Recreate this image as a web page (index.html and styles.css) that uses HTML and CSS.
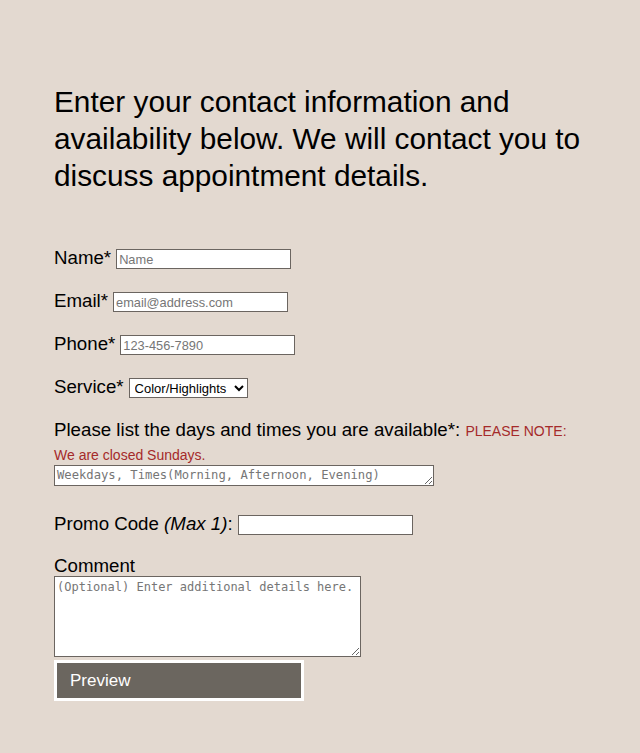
FILE: index.html
```html
<!DOCTYPE html>
<html lang="en">
<head>
<meta charset="utf-8">
<title>Appointment Request</title>
<link rel="stylesheet" href="styles.css">
</head>
<body>
<main class="page">
  <h1 class="intro">Enter your contact information and availability below. We will contact you to discuss appointment details.</h1>
  <form class="form">
    <div class="field">
      <label class="label" for="name">Name*</label>
      <input class="input" id="name" type="text" placeholder="Name">
    </div>
    <div class="field">
      <label class="label" for="email">Email*</label>
      <input class="input" id="email" type="text" placeholder="email@address.com">
    </div>
    <div class="field">
      <label class="label" for="phone">Phone*</label>
      <input class="input" id="phone" type="text" placeholder="123-456-7890">
    </div>
    <div class="field">
      <label class="label" for="service">Service*</label>
      <select class="select" id="service">
        <option>Color/Highlights</option>
      </select>
    </div>
    <div class="avail">
      <label class="avail-label" for="avail">Please list the days and times you are available*:</label>
      <span class="note">PLEASE NOTE:</span> <span class="note">We are closed Sundays.</span>
      <textarea class="avail-box" id="avail" placeholder="Weekdays, Times(Morning, Afternoon, Evening)"></textarea>
    </div>
    <div class="field promo">
      <label class="label" for="promo">Promo Code <em>(Max 1)</em>:</label>
      <input class="input" id="promo" type="text">
    </div>
    <div class="comment">
      <label class="label" for="comment">Comment</label>
      <textarea class="comment-box" id="comment" placeholder="(Optional) Enter additional details here."></textarea>
    </div>
    <button class="preview" type="button">Preview</button>
  </form>
</main>
</body>
</html>
```
FILE: styles.css
```css
html, body {
  margin: 0;
  padding: 0;
  background: #e3d9d0;
}
body {
  font-family: "Liberation Sans", Arial, sans-serif;
  color: #000;
}
.page {
  width: 530px;
  padding: 83px 0 40px 54px;
}
.intro {
  margin: 0;
  font-size: 29.8px;
  line-height: 37px;
  font-weight: normal;
}
.form {
  margin-top: 52px;
}
.field {
  display: flex;
  align-items: center;
  gap: 5px;
  height: 24px;
  margin-bottom: 19px;
}
.label {
  font-size: 18.7px;
  line-height: 24px;
}
.input {
  box-sizing: border-box;
  width: 175px;
  height: 20px;
  margin: 2px 0 0;
  padding: 1px 2px;
  border: 1px solid #6b6560;
  border-radius: 0;
  background: #fff;
  font-family: "Liberation Sans", Arial, sans-serif;
  font-size: 12.8px;
  outline: none;
}
.input::placeholder,
textarea::placeholder {
  color: #767676;
}
.select {
  box-sizing: border-box;
  width: 119px;
  height: 20px;
  margin: 2px 0 0;
  padding: 0 0 0 1px;
  border: 1px solid #6b6560;
  border-radius: 0;
  background: #fff;
  font-family: "Liberation Sans", Arial, sans-serif;
  font-size: 13px;
  color: #000;
}
.avail {
  font-size: 18.7px;
  line-height: 24px;
}
.note {
  font-size: 14px;
  line-height: 16px;
  color: #a52a2a;
}
.avail-box {
  display: block;
  box-sizing: border-box;
  width: 380px;
  height: 21px;
  margin: -1px 0 0;
  padding: 1px 2px;
  border: 1px solid #6b6560;
  border-radius: 0;
  background: #fff;
  font-family: "DejaVu Sans Mono", "Liberation Mono", monospace;
  font-size: 12.2px;
  line-height: 16px;
  resize: vertical;
  overflow: hidden;
}
.promo {
  margin-top: 26px;
  margin-bottom: 18px;
}
.comment .label {
  display: block;
}
.comment-box {
  display: block;
  box-sizing: border-box;
  width: 307px;
  height: 81px;
  margin: -2px 0 0;
  padding: 2px 2px;
  border: 1px solid #6b6560;
  border-radius: 0;
  background: #fff;
  font-family: "DejaVu Sans Mono", "Liberation Mono", monospace;
  font-size: 12px;
  line-height: 16px;
  resize: vertical;
}
.preview {
  display: block;
  box-sizing: border-box;
  width: 250px;
  height: 41px;
  margin-top: 3px;
  padding: 0 0 0 13px;
  border: 3px solid #fff;
  background: #6b665f;
  color: #fff;
  font-family: "Liberation Sans", Arial, sans-serif;
  font-size: 17px;
  text-align: left;
  cursor: pointer;
}
```
